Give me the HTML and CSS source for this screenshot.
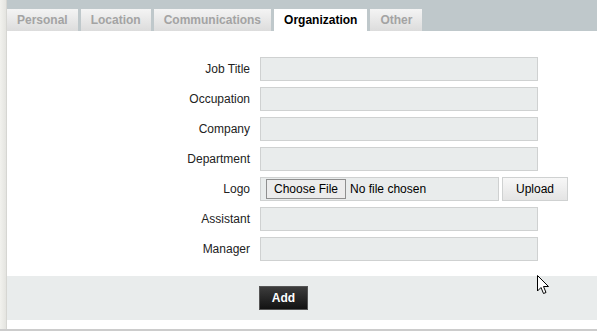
FILE: index.html
```html
<!DOCTYPE html>
<html>
<head>
    <meta charset="utf-8"/>
    <title>Organization</title>
    <link rel="stylesheet" href="styles.css">
</head>
<body>
<div class="page">
    <div class="side"></div>
    <div class="main">
        <div class="tabs">
            <a class="tab" href="#">Personal</a>
            <a class="tab" href="#">Location</a>
            <a class="tab" href="#">Communications</a>
            <a class="tab on" href="#">Organization</a>
            <a class="tab" href="#">Other</a>
        </div>
        <div class="form">
            <label>Job Title</label><div class="field"></div>
            <label>Occupation</label><div class="field"></div>
            <label>Company</label><div class="field"></div>
            <label>Department</label><div class="field"></div>
            <label>Logo</label>
            <div class="logo">
                <div class="file"><span class="choose">Choose File</span>No file chosen</div>
                <span class="upload">Upload</span>
            </div>
            <label>Assistant</label><div class="field"></div>
            <label>Manager</label><div class="field"></div>
        </div>
        <div class="foot">
            <span class="add">Add</span>
        </div>
    </div>
</div>
<div class="bottom"></div>
<svg class="cursor" width="13" height="20" viewBox="0 0 13 20">
    <path d="M0.5 0.5 L0.5 16 L4 12.5 L6.5 18.5 L9 17.5 L6.5 11.5 L11.5 11.5 Z" fill="#fff" stroke="#000" stroke-width="1"/>
</svg>
</body>
</html>
```
FILE: styles.css
```css
body{margin:0;font-family:"Liberation Sans",Arial,sans-serif;background:#fff;position:relative;}
.page{display:flex;width:597px;height:329px;}
.side{width:6px;background:linear-gradient(to right,#f2f2ee,#e4e4e0);border-right:1px solid #d6d6d2;}
.main{flex:1;display:flex;flex-direction:column;}
.tabs{height:31px;background:#bfc8cb;display:flex;align-items:flex-end;gap:3px;box-sizing:border-box;}
.tab{height:22px;line-height:22px;padding:0 10px;font-size:12px;font-weight:bold;color:#a3a3a3;text-decoration:none;background:linear-gradient(#f4f4f4,#dcdcdc);}
.tab.on{background:#fff;color:#000;}
.form{display:grid;grid-template-columns:243px 278px;column-gap:10px;row-gap:6px;padding:26px 0 15px;align-items:center;}
.form label{text-align:right;font-size:12px;color:#222;}
.field{height:24px;box-sizing:border-box;background:#e9ecec;border:1px solid #cfd1d1;}
.logo{display:flex;gap:3px;width:308px;}
.file{width:239px;height:24px;box-sizing:border-box;background:#e9ecec;border:1px solid #cfd1d1;display:flex;align-items:center;padding-left:5px;gap:4px;font-size:12px;color:#000;}
.choose{height:20px;line-height:18px;box-sizing:border-box;padding:0 7px;border:1px solid #8f8f8f;background:#ececec;font-size:12px;}
.upload{width:66px;height:24px;line-height:22px;box-sizing:border-box;text-align:center;font-size:12px;border:1px solid #cfd1d1;background:linear-gradient(#f7f7f7,#e4e4e4);color:#000;}
.foot{height:44px;background:#e9ecec;padding:10px 0 0 252px;box-sizing:border-box;}
.add{display:inline-block;width:49px;height:24px;line-height:22px;box-sizing:border-box;text-align:center;color:#fff;font-weight:bold;font-size:12px;border:1px solid #555;background:linear-gradient(#3c3c3c,#121212);}
.bottom{height:2px;background:#ccc;}
.cursor{position:absolute;left:537px;top:275px;}
```
